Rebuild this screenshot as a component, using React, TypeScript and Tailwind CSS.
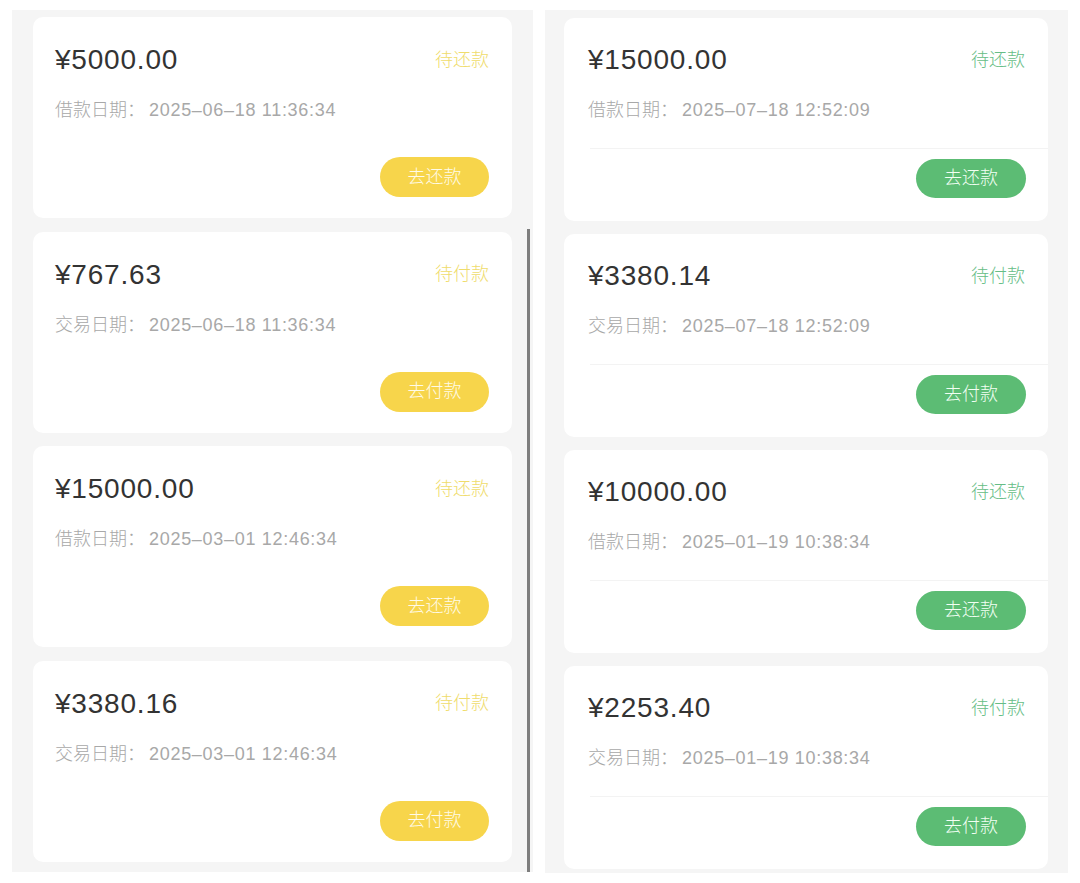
import React from "react";

type Item = { amount: string; label: string; date: string; status: string; btn: string };

const left: Item[] = [
  { amount: "¥5000.00", label: "借款日期：", date: "2025-06-18 11:36:34", status: "待还款", btn: "去还款" },
  { amount: "¥767.63", label: "交易日期：", date: "2025-06-18 11:36:34", status: "待付款", btn: "去付款" },
  { amount: "¥15000.00", label: "借款日期：", date: "2025-03-01 12:46:34", status: "待还款", btn: "去还款" },
  { amount: "¥3380.16", label: "交易日期：", date: "2025-03-01 12:46:34", status: "待付款", btn: "去付款" },
];

const right: Item[] = [
  { amount: "¥15000.00", label: "借款日期：", date: "2025-07-18 12:52:09", status: "待还款", btn: "去还款" },
  { amount: "¥3380.14", label: "交易日期：", date: "2025-07-18 12:52:09", status: "待付款", btn: "去付款" },
  { amount: "¥10000.00", label: "借款日期：", date: "2025-01-19 10:38:34", status: "待还款", btn: "去还款" },
  { amount: "¥2253.40", label: "交易日期：", date: "2025-01-19 10:38:34", status: "待付款", btn: "去付款" },
];

const font = { fontFamily: '"Liberation Sans", "Noto Sans CJK SC", sans-serif' };

function DateLine({ label, date }: { label: string; date: string }) {
  return (
    <div className="h-[24px] flex items-center text-[18px] leading-[24px] text-[#a8a8a8] font-light">
      <span>{label}</span>
      <span className="ml-[4px] tracking-[0.7px]">{date.replace(/-/g, "–")}</span>
    </div>
  );
}

function LeftCard({ it }: { it: Item }) {
  return (
    <div className="h-[201px] bg-white rounded-[10px] pl-[22px] pr-[23px] pt-[25px] flex flex-col">
      <div className="h-[36px] flex items-center justify-between">
        <span className="text-[28px] leading-[36px] tracking-[0.8px] text-[#333333]">{it.amount}</span>
        <span className="text-[18px] font-light text-[#efdc6c]">{it.status}</span>
      </div>
      <div className="mt-[20px]">
        <DateLine label={it.label} date={it.date} />
      </div>
      <div className="mt-[35px] flex justify-end">
        <div className="w-[109px] h-[40px] rounded-full bg-[#f7d54b] flex items-center justify-center text-[18px] font-light text-[#fffbe8]">
          {it.btn}
        </div>
      </div>
    </div>
  );
}

function RightCard({ it }: { it: Item }) {
  return (
    <div className="h-[203px] bg-white rounded-[10px] pt-[24px] flex flex-col">
      <div className="pl-[24px] pr-[23px]">
        <div className="h-[36px] flex items-center justify-between">
          <span className="text-[28px] leading-[36px] tracking-[0.8px] text-[#333333]">{it.amount}</span>
          <span className="text-[18px] font-light text-[#66bd86]">{it.status}</span>
        </div>
        <div className="mt-[20px]">
          <DateLine label={it.label} date={it.date} />
        </div>
      </div>
      <div className="mt-[26px] ml-[26px] h-px bg-[#f3f3f3]" />
      <div className="mt-[10px] pr-[22px] flex justify-end">
        <div className="w-[110px] h-[39px] rounded-full bg-[#5cbc74] flex items-center justify-center text-[18px] font-light text-[#f2fff3]">
          {it.btn}
        </div>
      </div>
    </div>
  );
}

export default function App() {
  return (
    <div className="w-[1080px] h-[883px] bg-white overflow-hidden pt-[10px] pl-[12px] flex gap-[12px]" style={font}>
      <div className="relative w-[521px] h-[862px] bg-[#f5f5f5] pl-[21px] pr-[21px] pt-[7px] flex flex-col gap-[13.5px]">
        {left.map((it, i) => (
          <LeftCard key={i} it={it} />
        ))}
        <div className="absolute left-[515px] top-[219px] bottom-0 w-[3px] bg-[#7e7e7e]" />
      </div>
      <div className="w-[523px] h-[863px] bg-[#f5f5f5] pl-[19px] pt-[8px] flex flex-col gap-[13px]">
        {right.map((it, i) => (
          <div key={i} className="w-[484px]">
            <RightCard it={it} />
          </div>
        ))}
      </div>
    </div>
  );
}
